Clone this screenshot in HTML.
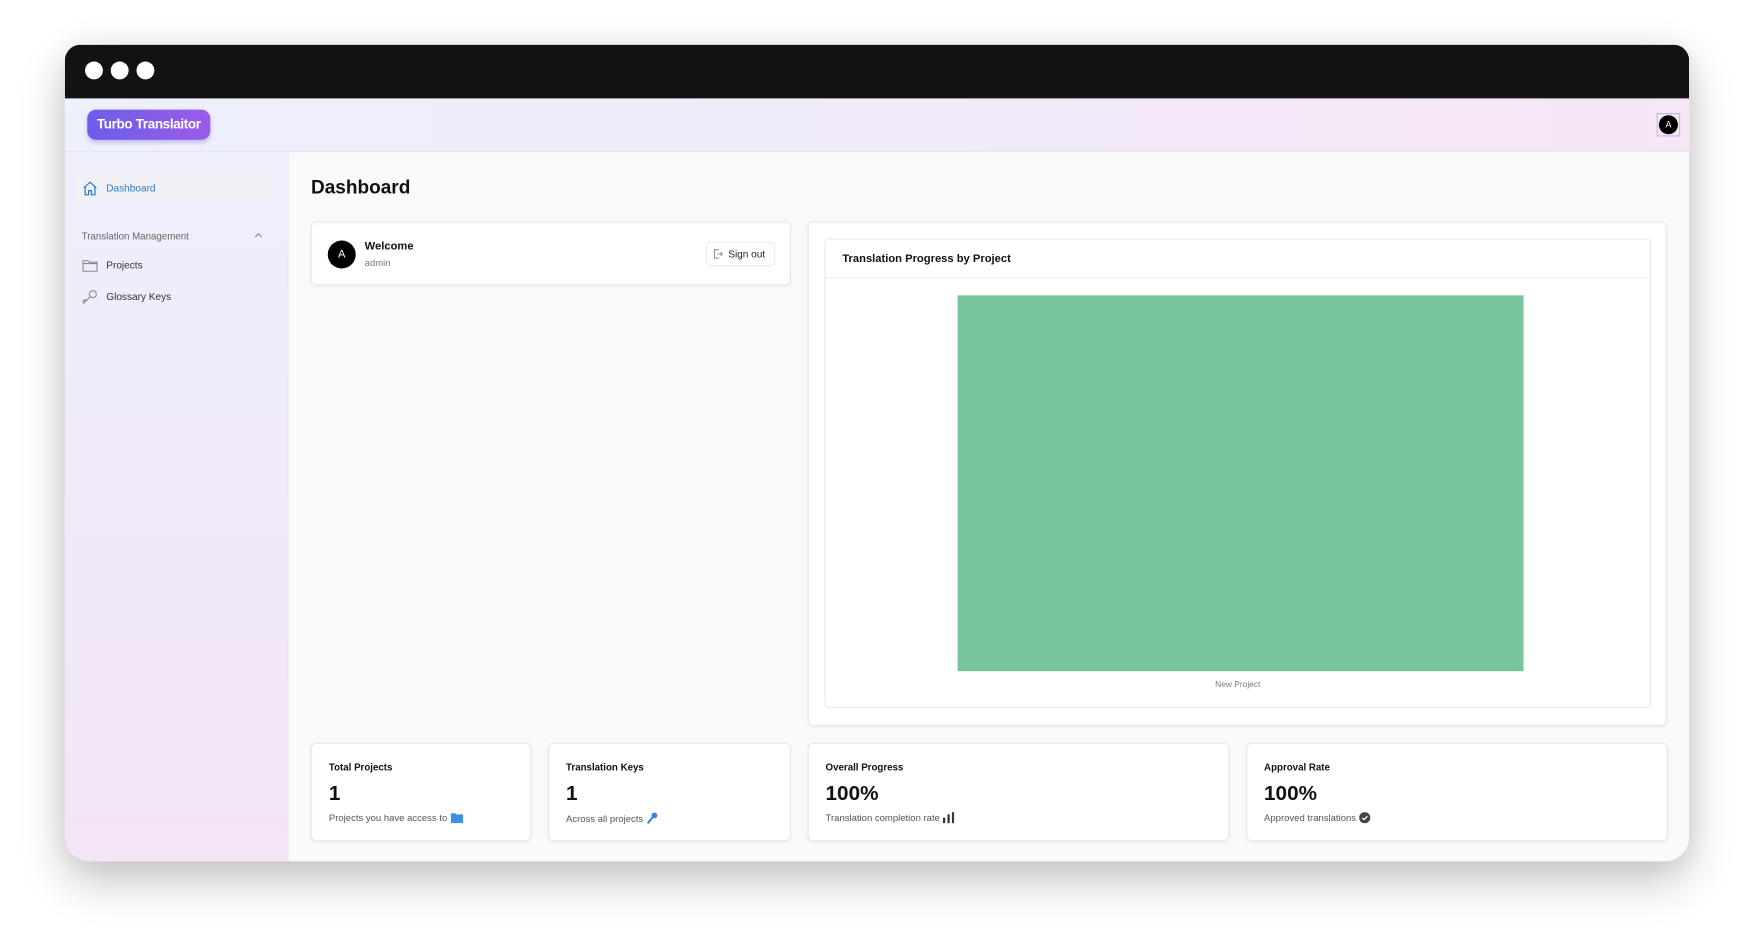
<!DOCTYPE html>
<html><head><meta charset="utf-8"><style>
*{box-sizing:border-box;margin:0;padding:0}
html,body{width:1754px;height:947px;overflow:hidden;background:#fff;font-family:"Liberation Sans",sans-serif}
#s{position:absolute;left:0;top:0;width:1568px;height:847px;transform:scale(1.11863);transform-origin:0 0}
.win{position:absolute;left:58px;top:40px;width:1452px;height:730px;border-radius:14px 14px 22px 22px;overflow:hidden;box-shadow:0 18px 40px rgba(0,0,0,.22),0 0 30px rgba(0,0,0,.08);background:#fafafa}
.tb{position:absolute;left:0;top:0;width:100%;height:48px;background:#121212}
.dot{position:absolute;top:15px;width:16px;height:16px;border-radius:50%;background:#fff}
.hd{position:absolute;left:0;top:48px;width:100%;height:48px;background:linear-gradient(90deg,#eef0fd,#f1e9f9 60%,#f7e6f3);border-bottom:1px solid #e6e4ee}
.logo{position:absolute;left:20px;top:10px;width:110px;height:27px;border-radius:8px;background:linear-gradient(90deg,#6b5ee9,#9a5ce9);color:#fff;font-weight:bold;font-size:12px;letter-spacing:-.3px;line-height:27px;text-align:center;box-shadow:0 2px 4px rgba(90,70,200,.3)}
.av{position:absolute;left:1423px;top:13px;width:21px;height:21px;border:1px solid #b8bcf5;padding:1px}
.av div{width:17px;height:17px;border-radius:50%;background:#000;color:#fff;font-size:8px;text-align:center;line-height:17px}
.sb{position:absolute;left:0;top:96px;width:200px;height:634px;background:linear-gradient(180deg,#efeffc,#f0e8fa 60%,#f3e4f6);border-right:1px solid #e8e6ee}
.sb .it{position:absolute;left:10px;width:174px;height:25px;font-size:9px;color:#333;line-height:25px;padding-left:27px}
.sb svg{position:absolute;left:5px;top:5px}
.main{position:absolute;left:200px;top:96px}
.card{position:absolute;background:#fff;border:1px solid #e9e9ec;border-radius:5px;box-shadow:0 1px 3px rgba(0,0,0,.06)}
.st .t{position:absolute;left:15px;top:16px;font-size:8.7px;font-weight:bold;color:#111}
.st .n{position:absolute;left:15px;top:33px;font-size:18.5px;font-weight:bold;color:#111}
.st .d{position:absolute;left:15px;top:61px;font-size:8.5px;color:#555;white-space:nowrap}
.st .d svg{vertical-align:-2px;margin-left:3px}
</style></head><body><div id="s">
<div class="win">
<div class="tb"><div class="dot" style="left:18px"></div><div class="dot" style="left:41px"></div><div class="dot" style="left:64px"></div></div>
<div class="hd"><div class="logo">Turbo Translaitor</div><div class="av"><div>A</div></div></div>
<div class="sb">
<div class="it" style="top:20px;background:#f1f0f4;border-radius:5px;color:#2f7bd0">
<svg width="15" height="15" viewBox="0 0 24 24" fill="none" stroke="#2f7bd0" stroke-width="1.8"><path d="M3 11l9-8 9 8M5 9.5V21h5v-6h4v6h5V9.5"/></svg>Dashboard</div>
<div style="position:absolute;left:15px;top:70px;font-size:8.7px;color:#666">Translation Management</div>
<svg style="position:absolute;left:169px;top:71px" width="8" height="6" viewBox="0 0 8 6" fill="none" stroke="#888" stroke-width="1"><path d="M1 5l3-3 3 3"/></svg>
<div class="it" style="top:89px"><svg width="15" height="15" viewBox="0 0 24 24" fill="none" stroke="#888" stroke-width="1.5"><path d="M2 5h7l2 2h11v13H2zM2 9h20"/></svg>Projects</div>
<div class="it" style="top:117px"><svg width="15" height="15" viewBox="0 0 24 24" fill="none" stroke="#888" stroke-width="1.5"><circle cx="16" cy="8" r="5"/><path d="M12.5 11.5L3 21l-1-3 2-2 2 1 1-2"/></svg>Glossary Keys</div>
</div>
<div class="main">
<div style="position:absolute;left:20px;top:22px;font-size:17px;font-weight:bold;color:#111">Dashboard</div>
<div class="card" style="left:20px;top:62px;width:429px;height:57px">
<div style="position:absolute;left:14px;top:16px;width:25px;height:25px;border-radius:50%;background:#000;color:#fff;font-size:10px;text-align:center;line-height:25px">A</div>
<div style="position:absolute;left:47px;top:16px;font-size:10px;font-weight:bold;color:#111">Welcome</div>
<div style="position:absolute;left:47px;top:31px;font-size:8.5px;color:#777">admin</div>
<div style="position:absolute;left:352px;top:17px;width:62px;height:22px;border:1px solid #ececee;border-radius:5px;font-size:9px;color:#222;line-height:20px;padding-left:19px">
<svg style="position:absolute;left:5px;top:5px" width="10" height="10" viewBox="0 0 24 24" fill="none" stroke="#888" stroke-width="2"><path d="M14 3H4v18h10M10 12h11M17 8l4 4-4 4"/></svg>Sign out</div>
</div>
<div class="card" style="left:464px;top:62px;width:768px;height:451px">
<div style="position:absolute;left:14px;top:14px;width:739px;height:420px;border:1px solid #e9e9ec;border-radius:4px">
<div style="height:35px;border-bottom:1px solid #ececef;font-size:10px;font-weight:bold;color:#111;padding:12px 0 0 15px">Translation Progress by Project</div>
<div style="position:absolute;left:118px;top:50px;width:506px;height:336px;background:#78c59d"></div>
<div style="position:absolute;left:0;width:100%;top:393px;text-align:center;font-size:7.5px;color:#777">New Project</div>
</div></div>
<div class="card st" style="left:20px;top:528px;width:197px;height:88px"><div class="t">Total Projects</div><div class="n">1</div><div class="d">Projects you have access to<svg width="11" height="10" viewBox="0 0 11 10"><path d="M0 1h4l1 1h6v8H0z" fill="#3d8fe0"/></svg></div></div>
<div class="card st" style="left:232px;top:528px;width:217px;height:88px"><div class="t">Translation Keys</div><div class="n">1</div><div class="d">Across all projects<svg width="10" height="11" viewBox="0 0 10 11"><circle cx="7" cy="3" r="2.6" fill="#3d7fe6"/><path d="M5.5 4.5L1 10" stroke="#3d7fe6" stroke-width="1.8"/></svg></div></div>
<div class="card st" style="left:464px;top:528px;width:377px;height:88px"><div class="t">Overall Progress</div><div class="n">100%</div><div class="d">Translation completion rate<svg width="10" height="10" viewBox="0 0 10 10" fill="#333"><rect x="0" y="5" width="2" height="5"/><rect x="4" y="2" width="2" height="8"/><rect x="8" y="0" width="2" height="10"/></svg></div></div>
<div class="card st" style="left:856px;top:528px;width:377px;height:88px"><div class="t">Approval Rate</div><div class="n">100%</div><div class="d">Approved translations<svg width="10" height="10" viewBox="0 0 10 10"><circle cx="5" cy="5" r="5" fill="#444"/><path d="M2.8 5.2l1.6 1.5 3-3" stroke="#fff" stroke-width="1.2" fill="none"/></svg></div></div>
</div>
</div>
</div></body></html>
